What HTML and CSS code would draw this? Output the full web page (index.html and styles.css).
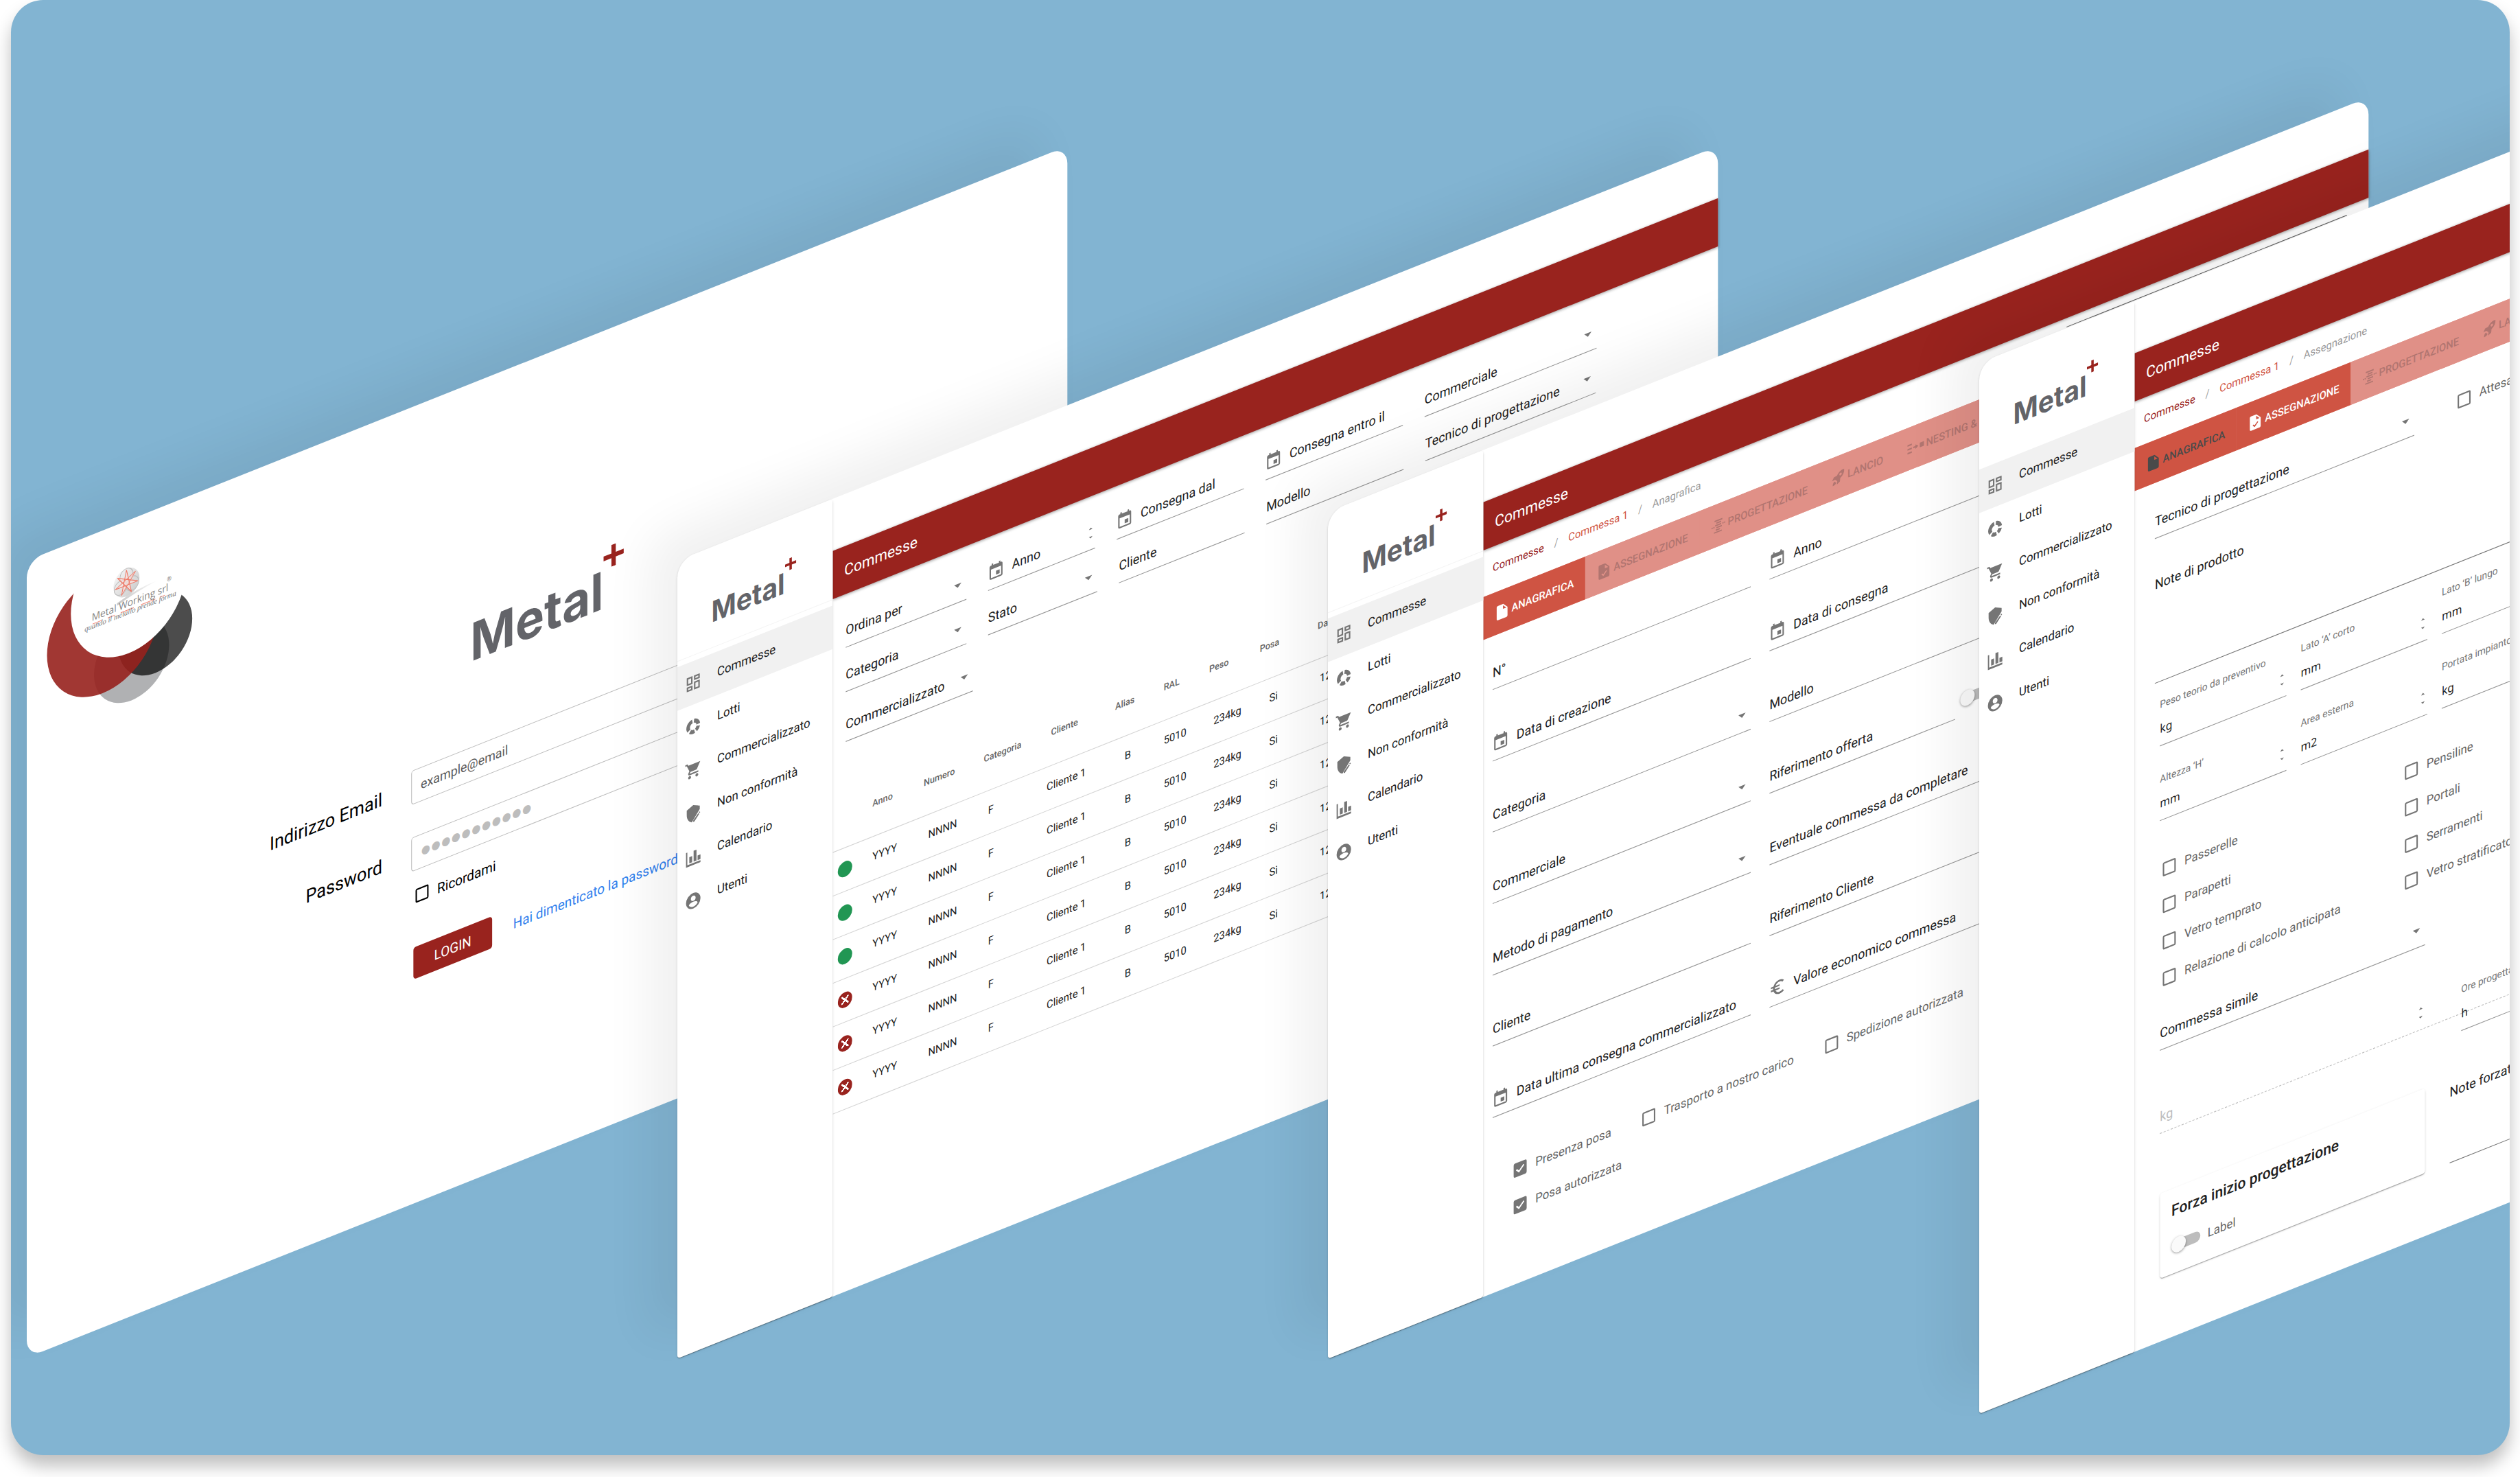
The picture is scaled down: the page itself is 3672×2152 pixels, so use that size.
FILE: index.html
```html
<!DOCTYPE html>
<html lang="it">
<head>
<meta charset="utf-8">
<title>Metal+</title>
<link rel="stylesheet" href="styles.css">
</head>
<body>
<svg class="sprite" aria-hidden="true">
  <symbol id="i-plus" viewBox="0 0 28 28"><path d="M11 0h6v11h11v6H17v11h-6V17H0v-6h11z"/></symbol>
  <symbol id="i-dashboard" viewBox="0 0 24 24"><path d="M19 5v2h-4V5h4M9 5v6H5V5h4m10 8v6h-4v-6h4M9 17v2H5v-2h4M21 3h-8v6h8V3zM11 3H3v10h8V3zm10 8h-8v10h8V11zm-10 4H3v6h8v-6z"/></symbol>
  <symbol id="i-lots" viewBox="0 0 24 24"><g fill="none" stroke="currentColor" stroke-width="5"><path d="M13 5A7 7 0 0 1 19 11"/><path d="M18.900 13.500A7 7 0 0 1 15.800 17.900"/><path d="M13.800 18.800A7 7 0 0 1 7.600 17.500"/><path d="M6 15.700A7 7 0 0 1 10.800 5.100"/></g></symbol>
  <symbol id="i-cart" viewBox="0 0 24 24"><path d="M7 18c-1.100 0-2 .9-2 2s.9 2 2 2 2-.9 2-2-.9-2-2-2zM1 2v2h2l3.600 7.590-1.350 2.450C4.520 15.370 5.480 17 7 17h12v-2H7.420a.25.25 0 0 1-.25-.25l.03-.12.900-1.630h7.450c.75 0 1.410-.41 1.750-1.030L21.700 4H5.210L4.270 2H1zm16 16c-1.100 0-2 .9-2 2s.9 2 2 2 2-.9 2-2-.9-2-2-2z"/></symbol>
  <symbol id="i-shield" viewBox="0 0 24 24"><path d="M12 1l9 4v4.500L10 22.500C5.500 20.500 3 16 3 11V5zM20.500 12.300l1.200 1.200-.8 1-1.300-1.200zM19 14.100l1.300 1.300-6.800 7.300h-1.700v-1.600z"/></symbol>
  <symbol id="i-chart" viewBox="0 0 24 24"><path d="M2 3h1.800v16.500H22V22H2zM6.500 10h4v8h-4zM12.500 4h4v14h-4zM18 12h4v6h-4z"/></symbol>
  <symbol id="i-user" viewBox="0 0 24 24"><path d="M12 2a10 10 0 1 0 0 20 10 10 0 0 0 0-20zm0 3.500a3.300 3.300 0 1 1 0 6.600 3.300 3.300 0 0 1 0-6.600zM12 19.500c-2.500 0-4.800-1.200-6-3.200 0-2 4-3.100 6-3.100s6 1.100 6 3.100c-1.200 2-3.500 3.200-6 3.200z" fill-rule="evenodd"/></symbol>
  <symbol id="i-date" viewBox="0 0 24 24"><path d="M17 12h-5v5h5v-5zM16 1v2H8V1H6v2H5c-1.110 0-1.990.9-1.990 2L3 19c0 1.100.89 2 2 2h14c1.100 0 2-.9 2-2V5c0-1.100-.9-2-2-2h-1V1h-2zm3 18H5V8h14v11z"/></symbol>
  <symbol id="i-euro" viewBox="0 0 24 24"><path d="M15 18.500A6.480 6.480 0 0 1 9.240 15H15v-2H8.580a6.400 6.400 0 0 1 0-2H15V9H9.240A6.490 6.490 0 0 1 15 5.500c1.610 0 3.090.59 4.230 1.570L21 5.300A8.960 8.960 0 0 0 15 3c-3.920 0-7.240 2.510-8.480 6H3v2h3.060a8.200 8.200 0 0 0 0 2H3v2h3.520c1.240 3.490 4.560 6 8.480 6 2.310 0 4.410-.87 6-2.300l-1.780-1.770A6.400 6.400 0 0 1 15 18.500z"/></symbol>
  <symbol id="i-arrow" viewBox="0 0 24 24"><path d="M7 9.500l5 5 5-5z"/></symbol>
  <symbol id="i-step" viewBox="0 0 12 24"><path d="M3.500 7.500L6 5l2.500 2.500zM3.500 16.500L6 19l2.500-2.500z"/></symbol>
  <symbol id="i-file" viewBox="0 0 24 24"><path d="M5 1h9l7 7v13c0 1.100-.9 2-2 2H5c-1.100 0-2-.9-2-2V3c0-1.100.9-2 2-2zm8.500 2v5.500H19z" fill-rule="evenodd"/></symbol>
  <symbol id="i-task" viewBox="0 0 24 24"><path d="M5 1h9l7 7v13c0 1.100-.9 2-2 2H5c-1.100 0-2-.9-2-2V3c0-1.100.9-2 2-2zm8.500 2v5.500H19zM11 19.500l6-6-1.400-1.400-4.600 4.600-2-2-1.400 1.400z" fill-rule="evenodd"/></symbol>
  <symbol id="i-plan" viewBox="0 0 24 24"><path d="M6 3h13v2H6zM9 6.500h8v2H9zM7 10h10v2H7zM9 13.500h9v2H9zM8 17h7v2H8zM5 20.500h13v2H5zM1 12h2v2H1zM4 12h2v2H4zM19 10h2v2h-2zM22 10h2v2h-2z"/></symbol>
  <symbol id="i-rocket" viewBox="0 0 24 24"><path d="M22 2c-5-.5-9 1.500-12 6.500L5 9l-3 5 5-.5 3.500 3.500L10 22l5-3 .5-5C20.500 11 22.500 7 22 2zm-6 4a2 2 0 1 1 0 4 2 2 0 0 1 0-4zM6 16c-2 1-3 3-3 6 3 0 5-1 6-3z" fill-rule="evenodd"/></symbol>
  <symbol id="i-nest" viewBox="0 0 24 24"><path d="M1 6h6v2H1zM1 11h6v2H1zM1 16h6v2H1zM9 11h3V9l4 3-4 3v-2H9zM18 9h6v6h-6z"/></symbol>
</svg>

<main class="stage">

  <section class="screen screen--login">
    <svg class="brand-mark" viewBox="0 0 240 240" role="img" aria-label="Metal Working srl">
      <defs>
        <linearGradient id="ball" x1="0" y1="0" x2="1" y2="1"><stop offset="0" stop-color="#f8f8f8"/><stop offset="1" stop-color="#c9c9c9"/></linearGradient>
        <linearGradient id="swoosh"><stop offset="0" stop-color="#c4c4c4"/><stop offset="1" stop-color="#fff"/></linearGradient>
      </defs>
      <circle cx="145" cy="181" r="52" fill="#b0b1b3"/>
      <circle cx="178" cy="159" r="51" fill="#000" fill-opacity=".7"/>
      <circle cx="105" cy="132" r="77" fill="#97211d" fill-opacity=".9"/>
      <circle cx="141" cy="91" r="80" fill="#fff"/>
      <path d="M125 101Q150 92 182 92Q150 96 125 104z" fill="url(#swoosh)"/>
      <circle cx="138" cy="79" r="18" fill="url(#ball)"/>
      <g fill="none" stroke="#bdbdbd"><circle cx="138" cy="70" r="9"/><circle cx="130" cy="83" r="9"/><circle cx="146" cy="83" r="9"/></g>
      <path d="M138 63L144.900 93.400L125.500 69L153.600 82.600L122.400 82.600L150.500 69L131.100 93.400z" fill="#fbe3de" fill-opacity=".7" stroke="#ee7a68"/>
      <path d="M91 115h13M112 115h10M130 115h18M158 115h20M184 115h7" stroke="#f08a7c"/>
      <text x="90" y="111" class="brand-name">Metal Working srl</text>
      <text x="80" y="121" class="brand-claim">quando il metallo prende forma</text>
      <text x="194" y="99" class="brand-reg">®</text>
    </svg>
    <h1 class="logo logo--large">Metal<svg class="logo__plus"><use href="#i-plus"/></svg></h1>
    <form class="login">
      <label class="login__label" for="email">Indirizzo Email</label>
      <input class="login__input" id="email" type="email" value="example@email">
      <label class="login__label" for="password">Password</label>
      <input class="login__input login__input--password" id="password" type="password" value="12345678901">
      <div class="login__extra">
        <label class="check check--dark"><input type="checkbox"><span>Ricordami</span></label>
        <div class="login__actions">
          <button class="login__button" type="button">LOGIN</button>
          <a class="login__link" href="#">Hai dimenticato la password</a>
        </div>
      </div>
    </form>
  </section>

  <section class="screen screen--list">
    <aside class="sidebar">
      <div class="sidebar__head"><span class="logo">Metal<svg class="logo__plus"><use href="#i-plus"/></svg></span></div>
      <nav class="menu">
        <a class="menu__item menu__item--on" href="#"><svg class="icon"><use href="#i-dashboard"/></svg><span>Commesse</span></a>
        <a class="menu__item" href="#"><svg class="icon"><use href="#i-lots"/></svg><span>Lotti</span></a>
        <a class="menu__item" href="#"><svg class="icon"><use href="#i-cart"/></svg><span>Commercializzato</span></a>
        <a class="menu__item" href="#"><svg class="icon"><use href="#i-shield"/></svg><span>Non conformità</span></a>
        <a class="menu__item" href="#"><svg class="icon"><use href="#i-chart"/></svg><span>Calendario</span></a>
        <a class="menu__item" href="#"><svg class="icon"><use href="#i-user"/></svg><span>Utenti</span></a>
      </nav>
    </aside>
    <div class="content">
      <header class="bar">Commesse</header>
      <form class="filters">
        <div class="filters__row filters__row--first">
          <label class="field"><select aria-label="Ordina per"><option>Ordina per</option></select><svg class="icon field__end"><use href="#i-arrow"/></svg></label>
          <label class="field"><svg class="icon field__icon"><use href="#i-date"/></svg><input type="text" aria-label="Anno" placeholder="Anno"><svg class="field__step"><use href="#i-step"/></svg></label>
          <label class="field"><svg class="icon field__icon"><use href="#i-date"/></svg><input type="text" aria-label="Consegna dal" placeholder="Consegna dal"></label>
          <label class="field"><svg class="icon field__icon"><use href="#i-date"/></svg><input type="text" aria-label="Consegna entro il" placeholder="Consegna entro il"></label>
          <label class="field"><select aria-label="Commerciale"><option>Commerciale</option></select><svg class="icon field__end"><use href="#i-arrow"/></svg></label>
        </div>
        <div class="filters__row filters__row--second">
          <label class="field"><select aria-label="Categoria"><option>Categoria</option></select><svg class="icon field__end"><use href="#i-arrow"/></svg></label>
          <label class="field"><select aria-label="Stato"><option>Stato</option></select><svg class="icon field__end"><use href="#i-arrow"/></svg></label>
          <label class="field"><input type="text" aria-label="Cliente" placeholder="Cliente"></label>
          <label class="field"><input type="text" aria-label="Modello" placeholder="Modello"></label>
          <label class="field"><select aria-label="Tecnico di progettazione"><option>Tecnico di progettazione</option></select><svg class="icon field__end"><use href="#i-arrow"/></svg></label>
        </div>
        <div class="filters__row filters__row--third">
          <label class="field"><select aria-label="Commercializzato"><option>Commercializzato</option></select><svg class="icon field__end"><use href="#i-arrow"/></svg></label>
        </div>
      </form>
      <table class="orders">
        <colgroup><col class="c-status"><col class="c-anno"><col class="c-num"><col class="c-cat"><col class="c-cli"><col class="c-alias"><col class="c-ral"><col class="c-peso"><col class="c-posa"><col></colgroup>
        <thead><tr><th></th><th>Anno</th><th>Numero</th><th>Categoria</th><th class="in-s">Cliente</th><th>Alias</th><th>RAL</th><th>Peso</th><th>Posa</th><th>Data</th></tr></thead>
        <tbody>
          <tr><td><i class="dot"></i></td><td>YYYY</td><td class="in-s">NNNN</td><td class="in-s">F</td><td>Cliente 1</td><td class="in-m">B</td><td>5010</td><td class="in-s">234kg</td><td class="in-m">Si</td><td class="in-xs">12/12</td></tr>
          <tr><td><i class="dot"></i></td><td>YYYY</td><td class="in-s">NNNN</td><td class="in-s">F</td><td>Cliente 1</td><td class="in-m">B</td><td>5010</td><td class="in-s">234kg</td><td class="in-m">Si</td><td class="in-xs">12/12</td></tr>
          <tr><td><i class="dot"></i></td><td>YYYY</td><td class="in-s">NNNN</td><td class="in-s">F</td><td>Cliente 1</td><td class="in-m">B</td><td>5010</td><td class="in-s">234kg</td><td class="in-m">Si</td><td class="in-xs">12/12</td></tr>
          <tr><td><i class="dot dot--no"></i></td><td>YYYY</td><td class="in-s">NNNN</td><td class="in-s">F</td><td>Cliente 1</td><td class="in-m">B</td><td>5010</td><td class="in-s">234kg</td><td class="in-m">Si</td><td class="in-xs">12/12</td></tr>
          <tr><td><i class="dot dot--no"></i></td><td>YYYY</td><td class="in-s">NNNN</td><td class="in-s">F</td><td>Cliente 1</td><td class="in-m">B</td><td>5010</td><td class="in-s">234kg</td><td class="in-m">Si</td><td class="in-xs">12/12</td></tr>
          <tr><td><i class="dot dot--no"></i></td><td>YYYY</td><td class="in-s">NNNN</td><td class="in-s">F</td><td>Cliente 1</td><td class="in-m">B</td><td>5010</td><td class="in-s">234kg</td><td class="in-m">Si</td><td class="in-xs">12/12</td></tr>
        </tbody>
      </table>
    </div>
  </section>

  <section class="screen screen--details">
    <aside class="sidebar">
      <div class="sidebar__head"><span class="logo">Metal<svg class="logo__plus"><use href="#i-plus"/></svg></span></div>
      <nav class="menu">
        <a class="menu__item menu__item--on" href="#"><svg class="icon"><use href="#i-dashboard"/></svg><span>Commesse</span></a>
        <a class="menu__item" href="#"><svg class="icon"><use href="#i-lots"/></svg><span>Lotti</span></a>
        <a class="menu__item" href="#"><svg class="icon"><use href="#i-cart"/></svg><span>Commercializzato</span></a>
        <a class="menu__item" href="#"><svg class="icon"><use href="#i-shield"/></svg><span>Non conformità</span></a>
        <a class="menu__item" href="#"><svg class="icon"><use href="#i-chart"/></svg><span>Calendario</span></a>
        <a class="menu__item" href="#"><svg class="icon"><use href="#i-user"/></svg><span>Utenti</span></a>
      </nav>
    </aside>
    <div class="content">
      <header class="bar">Commesse</header>
      <div class="crumbs"><a class="crumbs__root" href="#">Commesse</a><span>/</span><a class="crumbs__link" href="#">Commessa 1</a><span>/</span><span>Anagrafica</span><hr class="crumbs__rule"></div>
      <nav class="tabs">
        <button class="tab tab--on" type="button"><svg class="tab__icon"><use href="#i-file"/></svg>ANAGRAFICA</button>
        <button class="tab" type="button" disabled><svg class="tab__icon"><use href="#i-task"/></svg>ASSEGNAZIONE</button>
        <button class="tab" type="button" disabled><svg class="tab__icon"><use href="#i-plan"/></svg>PROGETTAZIONE</button>
        <button class="tab" type="button" disabled><svg class="tab__icon"><use href="#i-rocket"/></svg>LANCIO</button>
        <button class="tab" type="button" disabled><svg class="tab__icon tab__icon--wide"><use href="#i-nest"/></svg>NESTING &amp;</button>
      </nav>
      <form class="details">
        <div class="details__grid">
          <label class="field"><input type="text" aria-label="N°" placeholder="N°"></label>
          <label class="field"><svg class="icon field__icon"><use href="#i-date"/></svg><input type="text" aria-label="Anno" placeholder="Anno"></label>
          <label class="field"><svg class="icon field__icon"><use href="#i-date"/></svg><input type="text" aria-label="Data di creazione" placeholder="Data di creazione"></label>
          <label class="field"><svg class="icon field__icon"><use href="#i-date"/></svg><input type="text" aria-label="Data di consegna" placeholder="Data di consegna"></label>
          <label class="field"><select aria-label="Categoria"><option>Categoria</option></select><svg class="icon field__end"><use href="#i-arrow"/></svg></label>
          <label class="field"><input type="text" aria-label="Modello" placeholder="Modello"></label>
          <label class="field"><select aria-label="Commerciale"><option>Commerciale</option></select><svg class="icon field__end"><use href="#i-arrow"/></svg></label>
          <div class="details__pair">
            <label class="field"><input type="text" aria-label="Riferimento offerta" placeholder="Riferimento offerta"></label>
            <input class="switch" type="checkbox" aria-label="Offerta">
          </div>
          <label class="field"><select aria-label="Metodo di pagamento"><option>Metodo di pagamento</option></select><svg class="icon field__end"><use href="#i-arrow"/></svg></label>
          <label class="field"><input type="text" aria-label="Eventuale commessa da completare" placeholder="Eventuale commessa da completare"></label>
          <label class="field"><input type="text" aria-label="Cliente" placeholder="Cliente"></label>
          <label class="field"><input type="text" aria-label="Riferimento Cliente" placeholder="Riferimento Cliente"></label>
          <label class="field"><svg class="icon field__icon"><use href="#i-date"/></svg><input type="text" aria-label="Data ultima consegna commercializzato" placeholder="Data ultima consegna commercializzato"></label>
          <label class="field"><svg class="icon field__icon"><use href="#i-euro"/></svg><input type="text" aria-label="Valore economico commessa" placeholder="Valore economico commessa"></label>
        </div>
        <div class="details__checks">
          <label class="check"><input type="checkbox" checked><span>Presenza posa</span></label>
          <label class="check"><input type="checkbox"><span>Trasporto a nostro carico</span></label>
          <label class="check"><input type="checkbox"><span>Spedizione autorizzata</span></label>
        </div>
        <div class="details__checks details__checks--next">
          <label class="check"><input type="checkbox" checked><span>Posa autorizzata</span></label>
        </div>
      </form>
    </div>
  </section>

  <section class="screen screen--assign">
    <aside class="sidebar">
      <div class="sidebar__head sidebar__head--plain"><span class="logo">Metal<svg class="logo__plus"><use href="#i-plus"/></svg></span></div>
      <nav class="menu">
        <a class="menu__item menu__item--on" href="#"><svg class="icon"><use href="#i-dashboard"/></svg><span>Commesse</span></a>
        <a class="menu__item" href="#"><svg class="icon"><use href="#i-lots"/></svg><span>Lotti</span></a>
        <a class="menu__item" href="#"><svg class="icon"><use href="#i-cart"/></svg><span>Commercializzato</span></a>
        <a class="menu__item" href="#"><svg class="icon"><use href="#i-shield"/></svg><span>Non conformità</span></a>
        <a class="menu__item" href="#"><svg class="icon"><use href="#i-chart"/></svg><span>Calendario</span></a>
        <a class="menu__item" href="#"><svg class="icon"><use href="#i-user"/></svg><span>Utenti</span></a>
      </nav>
    </aside>
    <div class="content">
      <header class="bar">Commesse</header>
      <div class="crumbs"><a class="crumbs__root" href="#">Commesse</a><span>/</span><a class="crumbs__link" href="#">Commessa 1</a><span>/</span><span>Assegnazione</span></div>
      <nav class="tabs">
        <button class="tab tab--done" type="button"><svg class="tab__icon"><use href="#i-file"/></svg>ANAGRAFICA</button>
        <button class="tab tab--on" type="button"><svg class="tab__icon"><use href="#i-task"/></svg>ASSEGNAZIONE</button>
        <button class="tab" type="button" disabled><svg class="tab__icon"><use href="#i-plan"/></svg>PROGETTAZIONE</button>
        <button class="tab" type="button" disabled><svg class="tab__icon"><use href="#i-rocket"/></svg>LANCIO</button>
      </nav>
      <form class="assign">
        <div class="assign__top">
          <label class="field"><select aria-label="Tecnico di progettazione"><option>Tecnico di progettazione</option></select><svg class="icon field__end"><use href="#i-arrow"/></svg></label>
          <label class="check"><input type="checkbox"><span>Attesa</span></label>
        </div>
        <textarea class="note" aria-label="Note di prodotto" placeholder="Note di prodotto"></textarea>
        <div class="measures">
          <label class="measure"><span>Peso teorio da preventivo</span><input type="text" value="kg"><svg class="field__step"><use href="#i-step"/></svg></label>
          <label class="measure"><span>Lato ‘A’ corto</span><input type="text" value="mm"><svg class="field__step"><use href="#i-step"/></svg></label>
          <label class="measure"><span>Lato ‘B’ lungo</span><input type="text" value="mm"></label>
          <label class="measure"><span>Altezza ‘H’</span><input type="text" value="mm"><svg class="field__step"><use href="#i-step"/></svg></label>
          <label class="measure"><span>Area esterna</span><input type="text" value="m2"><svg class="field__step"><use href="#i-step"/></svg></label>
          <label class="measure"><span>Portata impianto</span><input type="text" value="kg"></label>
        </div>
        <div class="options">
          <label class="check"><input type="checkbox"><span>Passerelle</span></label>
          <label class="check"><input type="checkbox"><span>Pensiline</span></label>
          <label class="check"><input type="checkbox"><span>Parapetti</span></label>
          <label class="check"><input type="checkbox"><span>Portali</span></label>
          <label class="check"><input type="checkbox"><span>Vetro temprato</span></label>
          <label class="check"><input type="checkbox"><span>Serramenti</span></label>
          <label class="check"><input type="checkbox"><span>Relazione di calcolo anticipata</span></label>
          <label class="check"><input type="checkbox"><span>Vetro stratificato</span></label>
        </div>
        <label class="field assign__similar"><select aria-label="Commessa simile"><option>Commessa simile</option></select><svg class="icon field__end"><use href="#i-arrow"/></svg></label>
        <div class="hours">
          <label class="field field--off"><input type="text" aria-label="Peso" placeholder="kg" disabled><svg class="field__step"><use href="#i-step"/></svg></label>
          <label class="measure measure--plain"><span>Ore progettazione</span><input type="text" value="h"></label>
        </div>
        <div class="assign__bottom">
          <div class="card">
            <h2 class="card__title">Forza inizio progettazione</h2>
            <label class="card__switch"><input class="switch" type="checkbox"><span>Label</span></label>
          </div>
          <textarea class="note note--short" aria-label="Note forzatura" placeholder="Note forzatura"></textarea>
        </div>
      </form>
    </div>
  </section>
</main>
</body>
</html>
```
FILE: styles.css
```css
*, *::before, *::after { box-sizing: border-box; }

body {
  margin: 0;
  background: #fff;
  color: #212121;
  font-family: Roboto, "Liberation Sans", sans-serif;
  font-size: 16px;
  overflow: hidden;
}

a { color: inherit; text-decoration: none; }
button, input, select, textarea { font: inherit; color: inherit; }
input::placeholder, textarea::placeholder { color: inherit; opacity: 1; }
.sprite { position: absolute; width: 0; height: 0; }
svg { fill: currentColor; flex: none; }

.stage {
  position: relative;
  overflow: hidden;
  margin: 0 15px 32px 16px;
  min-height: calc(100vh - 32px);
  border-radius: 47px;
  background: #82b4d2;
  box-shadow: 0 16px 24px rgba(0, 0, 0, .25);
}

/* Tilted screens laid out on the canvas */
.screen {
  position: absolute;
  display: flex;
  width: 1440px;
  min-height: 1024px;
  border-radius: 22px;
  background: #fff;
  box-shadow: -40px -40px 60px rgba(0, 0, 0, .06);
  transform-origin: 0 0;
  transform: matrix(1.053, -.4196, 0, 1.134, 0, 0);
}
.screen--login { left: 23px; top: 817px; display: block; }
.screen--list { left: 971px; top: 817px; min-height: 1025px; border-bottom-left-radius: 4px; }
.screen--details { left: 1919px; top: 746px; min-height: 1088px; border-bottom-left-radius: 4px; }
.screen--assign { left: 2868px; top: 529px; min-height: 1350px; border-bottom-left-radius: 4px; }

.icon { width: 24px; height: 24px; color: #757575; }

/* Logo */
.logo {
  display: inline-flex;
  align-items: flex-start;
  margin: 0;
  font: 700 37px/1 Inter, "Liberation Sans", sans-serif;
  color: #636469;
}
.logo__plus { width: .42em; height: .42em; margin-top: -.3em; color: #99231e; overflow: visible; }
.logo--large { display: flex; justify-content: center; font-size: 67px; }

/* Login */
.brand-mark { display: block; width: 240px; height: 240px; }
.brand-name { font: 13px "Open Sans", sans-serif; fill: #858585; }
.brand-claim { font: italic 10px "Liberation Serif", serif; fill: #777; }
.brand-reg { font: 8px Roboto, sans-serif; fill: #777; }
.screen--login .logo { margin-top: 59px; }
.login {
  display: grid;
  grid-template-columns: 492px 400px;
  column-gap: 40px;
  row-gap: 42px;
  margin-top: 101px;
  color: #000;
}
.login__label { align-self: center; text-align: right; font-size: 24px; line-height: 44px; }
.login__input {
  height: 44px;
  padding: 0 12px;
  border: 1px solid #bdbdbd;
  border-radius: 4px;
  background: none;
  font-size: 17px;
  color: #5c5c5c;
}
.login__input--password { font: 40px/42px "Liberation Sans", sans-serif; color: #bdbdbd; }
.login__extra { grid-column: 2; margin: -21px 0 0 3px; font-size: 18px; }
.login__actions { display: flex; align-items: center; gap: 29px; margin-top: 53px; white-space: nowrap; }
.login__button {
  width: 109px;
  height: 41px;
  border: 0;
  border-radius: 4px;
  background: #99231e;
  color: #fff;
}
.login__link { color: #2f80ed; }

/* Sidebar */
.sidebar {
  position: relative;
  z-index: 1;
  flex: none;
  width: 215px;
  border-radius: 22px 4px 4px 4px;
  background: #fff;
  box-shadow: 0 2px 1px -1px rgba(0, 0, 0, .2), 0 1px 1px rgba(0, 0, 0, .14), 0 1px 3px rgba(0, 0, 0, .12);
}
.sidebar__head { height: 130px; padding: 65px 0 0 47px; border-bottom: 1px solid #f5f5f5; }
.sidebar__head--plain { border-color: transparent; }
.menu { padding-top: 7px; }
.menu__item { display: flex; align-items: center; height: 56px; padding-left: 10px; gap: 21px; }
.menu__item span { padding-bottom: 4px; }
.menu__item--on { background: #f1f1f1; }

/* Content */
.content { flex: 1; min-width: 0; padding-top: 67px; }
.bar {
  height: 62px;
  padding-left: 16px;
  background: #99231e;
  box-shadow: 0 1px 4px rgba(0, 0, 0, .4);
  color: #fff;
  font-size: 20px;
  line-height: 62px;
}
.crumbs { position: relative; display: flex; gap: 14px; height: 60px; padding: 17px 0 0 13px; font-size: 14px; line-height: 20px; color: #9a9a9a; }
.crumbs__root { color: #99231e; }
.crumbs__link { color: #cf5443; }
.crumbs__rule { position: absolute; top: 11px; right: 30px; width: 388px; margin: 0; border: 0; border-top: 1px solid #616161; }
.tabs { display: flex; height: 55px; background: #e09087; }
.tab {
  display: flex;
  align-items: center;
  gap: 3px;
  padding: 0 16px;
  border: 0;
  background: #e09087;
  color: #b17570;
  font-size: 14px;
  font-weight: 500;
  white-space: nowrap;
}
.tab--on { background: #cf5443; color: #fff; }
.tab--done { background: #cf5443; color: #4a4a4a; }
.tab__icon { width: 20px; height: 20px; }
.tab__icon--wide { width: 24px; height: 24px; }

/* Fields */
.field {
  display: flex;
  align-items: center;
  height: 43px;
  border-bottom: 1px solid #949494;
  font-size: 17px;
}
.field input, .field select {
  flex: 1;
  min-width: 0;
  width: 100%;
  height: 40px;
  padding: 0;
  border: 0;
  background: none;
  appearance: none;
  opacity: 1;
}
.field__icon { margin: 0 10px 0 -1px; }
.field__end { margin-left: -24px; }
.field__step { width: 12px; height: 24px; color: #757575; }

.filters { padding: 26px 0 0 18px; }
.filters__row { display: grid; column-gap: 30px; }
.filters__row--first { grid-template-columns: 167px 148px 176px 190px 238px; }
.filters__row--second { grid-template-columns: 167px 151px 174px 190px 236px; margin-top: 14px; }
.filters__row--third { grid-template-columns: 176px; margin-top: 21px; }

.orders { width: 100%; margin-top: 51px; table-layout: fixed; border-collapse: collapse; font-size: 14px; text-align: left; }
.orders tr { border-bottom: 1px solid #d4d4d4; }
.orders th { height: 84px; padding: 0; font-size: 12px; font-weight: 500; color: #666; }
.orders td { height: 56px; padding: 0 0 5px; }
.orders td:first-child { padding: 0 0 0 7px; }
.orders .in-xs { padding-left: 3px; }
.orders .in-s { padding-left: 6px; }
.orders .in-m { padding-left: 13px; }
.c-status { width: 55px; }
.c-anno { width: 71px; }
.c-num { width: 83px; }
.c-cat { width: 87px; }
.c-cli { width: 95px; }
.c-alias { width: 67px; }
.c-ral { width: 63px; }
.c-peso { width: 70px; }
.c-posa { width: 80px; }
.dot { display: block; width: 20px; height: 20px; border-radius: 50%; background: #219653; }
.dot--no {
  background:
    linear-gradient(45deg, transparent 42%, #fff 42% 58%, transparent 58%) center / 10px 10px no-repeat,
    linear-gradient(-45deg, transparent 42%, #fff 42% 58%, transparent 58%) center / 10px 10px no-repeat,
    #99231e;
}

/* Checkboxes and switches */
.check { display: flex; align-items: center; height: 24px; gap: 12px; color: #666; white-space: nowrap; }
.check input {
  flex: none;
  display: grid;
  place-items: center;
  width: 18px;
  height: 18px;
  margin: 0 0 0 3px;
  border: 2px solid #757575;
  border-radius: 2px;
  appearance: none;
}
.check span { padding-bottom: 2px; }
.check input:checked { background: #757575; }
.check input:checked::after { content: ""; width: 14px; height: 14px; background: #fff; clip-path: polygon(8% 52%, 18% 42%, 38% 62%, 82% 18%, 92% 28%, 38% 82%); }
.check--dark { color: #000; }
.check--dark input { border-color: #000; }
.check--dark span { padding: 2px 0 0; }

.switch {
  position: relative;
  flex: none;
  width: 40px;
  height: 24px;
  margin: 0;
  appearance: none;
}
.switch::before { content: ""; position: absolute; left: 6px; top: 5px; width: 34px; height: 14px; border-radius: 7px; background: #bdbdbd; }
.switch::after { content: ""; position: absolute; left: 0; top: 2px; width: 20px; height: 20px; border-radius: 50%; background: #fafafa; box-shadow: 0 1px 3px rgba(0, 0, 0, .4); }

/* Order details */
.details { padding: 26px 0 0 13px; }
.details__grid {
  display: grid;
  grid-template-columns: 357px 357px;
  grid-auto-rows: 43px;
  align-content: space-between;
  column-gap: 26px;
  height: 593px;
}
.details__pair { display: flex; align-items: center; gap: 7px; }
.details__pair .field { width: 257px; }
.details__checks { display: flex; gap: 40px; padding: 67px 0 0 26px; }
.details__checks--next { padding-top: 23px; }

/* Assignment */
.assign { padding: 29px 0 0 28px; }
.assign__top { display: flex; align-items: center; gap: 57px; }
.assign__top .field { width: 359px; }
.note {
  display: block;
  width: 900px;
  height: 137px;
  margin-top: 49px;
  padding: 0;
  border: 0;
  border-bottom: 1px solid #757575;
  background: none;
  font-size: 17px;
  line-height: 20px;
  resize: none;
}
.note--short { width: 366px; height: 101px; margin-top: 8px; }
.measures { display: grid; grid-template-columns: 175px 175px 175px; gap: 35px 20px; margin: 22px 0 0 7px; }
.measure { display: grid; grid-template-columns: 1fr 12px; height: 61px; border-bottom: 1px solid #949494; }
.measure span { grid-column: 1 / -1; font-size: 13px; line-height: 16px; color: #757575; white-space: nowrap; }
.measure input { min-width: 0; height: 44px; padding: 0; border: 0; background: none; font: 15px "Noto Sans", sans-serif; }
.measure .field__step { margin-top: 10px; }
.options { display: grid; grid-template-columns: 335px auto; gap: 23px 0; justify-content: start; margin: 52px 0 0 8px; }
.assign__similar { width: 367px; margin: 35px 0 0 7px; }
.hours { display: grid; grid-template-columns: 367px 50px 366px; margin: 64px 0 0 7px; }
.field--off { grid-area: 1 / 1 / 2 / 4; border-bottom: 1px dashed #bdbdbd; color: #bdbdbd; }
.field--off input { flex: 0 0 355px; }
.measure--plain { grid-area: 1 / 3; margin-top: 4px; }
.assign__bottom { display: flex; gap: 34px; margin: 55px 0 0 7px; }
.card {
  width: 367px;
  padding: 16px 16px 17px;
  border-radius: 4px;
  box-shadow: 0 2px 1px -1px rgba(0, 0, 0, .2), 0 1px 1px rgba(0, 0, 0, .14), 0 1px 3px rgba(0, 0, 0, .12);
}
.card__title { margin: 0 0 22px; font-size: 20px; font-weight: 500; line-height: 24px; }
.card__switch { display: flex; align-items: center; gap: 10px; color: #666; }
```
